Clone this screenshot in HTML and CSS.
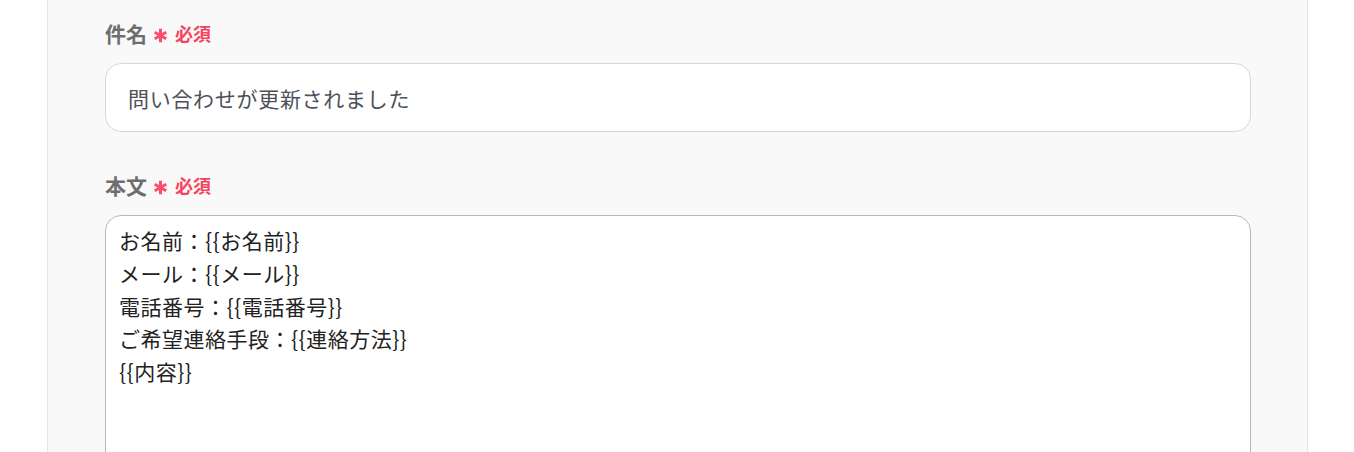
FILE: index.html
```html
<!DOCTYPE html>
<html lang="ja">
<head>
<meta charset="utf-8">
<title>メール設定</title>
<link rel="stylesheet" href="styles.css">
</head>
<body>
<div class="panel">
  <div class="field">
    <label class="label" for="subject">件名<svg class="star" viewBox="0 0 14 14" aria-hidden="true"><path d="M7 0.8v12.4M1.6 3.9l10.8 6.2M1.6 10.1l10.8-6.2"/></svg><span class="req">必須</span></label>
    <input id="subject" class="input" type="text" value="問い合わせが更新されました">
  </div>
  <div class="field field-body">
    <label class="label" for="body">本文<svg class="star" viewBox="0 0 14 14" aria-hidden="true"><path d="M7 0.8v12.4M1.6 3.9l10.8 6.2M1.6 10.1l10.8-6.2"/></svg><span class="req">必須</span></label>
    <textarea id="body" class="textarea">お名前：{{お名前}}
メール：{{メール}}
電話番号：{{電話番号}}
ご希望連絡手段：{{連絡方法}}
{{内容}}</textarea>
  </div>
</div>
</body>
</html>
```

FILE: styles.css
```css
html, body {
  margin: 0;
  padding: 0;
  background: #ffffff;
  height: 100%;
  overflow: hidden;
}

body {
  font-family: "Noto Sans CJK JP", "Noto Sans", sans-serif;
}

.panel {
  margin-left: 47px;
  width: 1202px;
  min-height: 600px;
  background: #f9f9f9;
  border-left: 1px solid #e4e4e4;
  border-right: 1px solid #e4e4e4;
  padding: 19px 0 0 57px;
  box-sizing: content-box;
}

.field {
  display: flex;
  flex-direction: column;
  gap: 17px;
  width: 1146px;
}

.field-body {
  margin-top: 39px;
}

.label {
  display: flex;
  align-items: center;
  height: 27px;
  font-size: 21px;
  font-weight: 700;
  color: #6e6e6e;
}

.star {
  width: 15px;
  height: 15px;
  margin: 5px 7px 0 6px;
  fill: none;
  stroke: #fb4d6b;
  stroke-width: 2.8;
  stroke-linecap: butt;
  flex: none;
}

.req {
  color: #f5455f;
  font-size: 18px;
  font-weight: 700;
}

.input {
  box-sizing: border-box;
  width: 100%;
  height: 69px;
  border: 1px solid #d5d8de;
  border-radius: 16px;
  background: #ffffff;
  padding: 0 22px;
  font-family: inherit;
  font-size: 21px;
  letter-spacing: 0.7px;
  color: #4b505a;
  outline: none;
}

.textarea {
  box-sizing: border-box;
  display: block;
  width: 100%;
  height: 300px;
  border: 1px solid #b9b9b9;
  border-radius: 16px;
  background: #ffffff;
  padding: 8px 13px;
  font-family: inherit;
  font-size: 21px;
  line-height: 32.75px;
  letter-spacing: 0.5px;
  color: #222222;
  resize: none;
  outline: none;
  overflow: hidden;
}
```
